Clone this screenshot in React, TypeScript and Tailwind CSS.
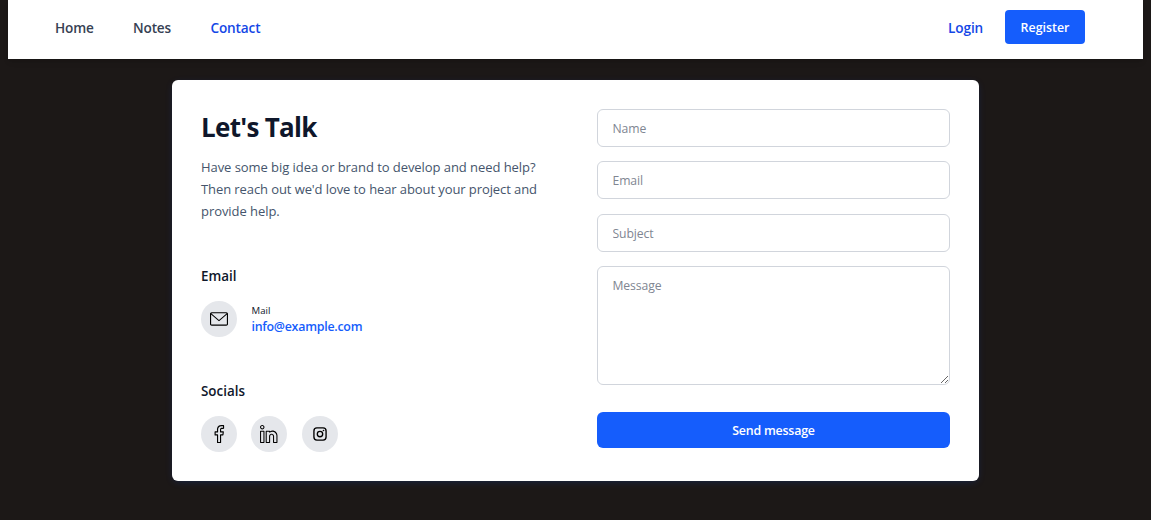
import React from "react";

const circle =
  "flex size-9 shrink-0 items-center justify-center rounded-full bg-[#e5e7eb] text-black";
const field =
  "block w-full rounded-md border border-[#d1d5dc] bg-white px-[14.5px] text-[12.2px] leading-[18px] tracking-[-0.1px] text-[#1e2939] outline-none placeholder:text-[#808692]";

function MailIcon() {
  return (
    <svg width="18" height="18" viewBox="0 0 479.058 479.058" fill="currentColor">
      <path d="M434.146 59.882H44.912C20.146 59.882 0 80.028 0 104.794v269.47c0 24.766 20.146 44.912 44.912 44.912h389.234c24.766 0 44.912-20.146 44.912-44.912v-269.47c0-24.766-20.146-44.912-44.912-44.912zm0 29.941c2.034 0 3.969.422 5.738 1.159L239.529 264.631 39.173 90.982a14.902 14.902 0 0 1 5.738-1.159zm0 299.411H44.912c-8.26 0-14.971-6.71-14.971-14.971V122.615l199.778 173.141c2.822 2.441 6.316 3.655 9.81 3.655s6.988-1.213 9.81-3.655l199.778-173.141v251.649c-.001 8.26-6.711 14.97-14.971 14.97z" />
    </svg>
  );
}

function FacebookIcon() {
  return (
    <svg width="18" height="18" viewBox="0 0 24 24" fill="currentColor">
      <path d="M6.812 13.937H9.33v9.312c0 .414.335.75.75.75l4.007.001a.75.75 0 0 0 .75-.75v-9.312h2.387a.75.75 0 0 0 .744-.657l.498-4a.75.75 0 0 0-.744-.843h-2.885c.113-2.471-.435-3.202 1.172-3.202 1.088-.13 2.804.421 2.804-.75V.909a.75.75 0 0 0-.648-.743A26.926 26.926 0 0 0 15.071 0c-7.01 0-5.567 7.772-5.74 8.437H6.812a.75.75 0 0 0-.75.75v4c0 .414.336.75.75.75zm.75-3.999h2.518a.75.75 0 0 0 .75-.75V6.037c0-2.883 1.545-4.536 4.24-4.536.878 0 1.686.042 2.242.087v2.149c-.402.205-3.976-.884-3.976 2.697v2.755c0 .414.336.75.75.75h2.786l-.312 2.5h-2.474a.75.75 0 0 0-.75.75V22.5h-2.505v-9.312a.75.75 0 0 0-.75-.75H7.562z" />
    </svg>
  );
}

function LinkedinIcon() {
  return (
    <svg width="18" height="18" viewBox="0 0 511 512" fill="currentColor">
      <path d="M111.898 160.664H15.5c-8.285 0-15 6.719-15 15V497c0 8.285 6.715 15 15 15h96.398c8.286 0 15-6.715 15-15V175.664c0-8.281-6.714-15-15-15zM96.898 482H30.5V190.664h66.398zM63.703 0C28.852 0 .5 28.352.5 63.195c0 34.852 28.352 63.2 63.203 63.2 34.848 0 63.195-28.352 63.195-63.2C126.898 28.352 98.551 0 63.703 0zm0 96.395c-18.308 0-33.203-14.891-33.203-33.2C30.5 44.891 45.395 30 63.703 30c18.305 0 33.195 14.89 33.195 33.195 0 18.309-14.89 33.2-33.195 33.2zm289.207 62.148c-22.8 0-45.273 5.496-65.398 15.777-.684-7.652-7.11-13.656-14.942-13.656h-96.406c-8.281 0-15 6.719-15 15V497c0 8.285 6.719 15 15 15h96.406c8.285 0 15-6.715 15-15V320.266c0-22.735 18.5-41.23 41.235-41.23 22.734 0 41.226 18.495 41.226 41.23V497c0 8.285 6.719 15 15 15h96.403c8.285 0 15-6.715 15-15V302.066c0-79.14-64.383-143.523-143.524-143.523zM466.434 482h-66.399V320.266c0-39.278-31.953-71.23-71.226-71.23-39.282 0-71.239 31.952-71.239 71.23V482h-66.402V190.664h66.402v11.082c0 5.77 3.309 11.027 8.512 13.524a15.01 15.01 0 0 0 15.875-1.82c20.313-16.294 44.852-24.907 70.953-24.907 62.598 0 113.524 50.926 113.524 113.523zm0 0" />
    </svg>
  );
}

function InstagramIcon() {
  return (
    <svg width="18" height="18" viewBox="0 0 24 24" fill="none" stroke="currentColor" strokeWidth="1.8">
      <rect x="3.9" y="3.9" width="16.2" height="16.2" rx="4" />
      <circle cx="12" cy="12" r="3.6" />
      <circle cx="16.7" cy="7.3" r="1.1" fill="currentColor" stroke="none" />
    </svg>
  );
}

function Navbar() {
  return (
    <header className="mx-2 flex h-[59px] items-center justify-between bg-white pr-[58px] pb-[5px] pl-[47px] shadow-md">
      <nav className="flex gap-[39.5px] pt-0.5 text-[13.6px] leading-5 font-semibold tracking-[-0.15px] text-[#364153]">
        <a className="w-[38.5px] whitespace-nowrap">Home</a>
        <a className="w-[38px] whitespace-nowrap">Notes</a>
        <a className="whitespace-nowrap text-[#1447e6]">Contact</a>
      </nav>
      <div className="flex items-center gap-[21px] text-[13.6px] font-semibold">
        <a className="w-9 pt-0.5 leading-5 tracking-[-0.1px] whitespace-nowrap text-[#1447e6]">Login</a>
        <button className="h-[34px] w-20 rounded bg-[#155dfc] pt-0.5 text-[12.4px] font-semibold text-white">
          Register
        </button>
      </div>
    </header>
  );
}

export default function App() {
  return (
    <div className="h-[520px] overflow-hidden bg-[#1c1817] font-['Open_Sans','Noto_Sans',sans-serif]">
      <Navbar />
      <main className="mx-auto mt-[21px] grid h-[401px] w-[807px] grid-cols-2 gap-[43px] rounded-md bg-white p-[29px] shadow-[0_2px_10px_-3px_rgba(6,81,237,0.3)]">
        <section>
          <h1 className="text-[26px] leading-9 font-bold tracking-[-0.7px] text-[#0f172b]">Let's Talk</h1>
          <p className="mt-[11px] text-[13px] leading-[22px] tracking-[-0.06px] whitespace-nowrap text-[#45556c]">
            Have some big idea or brand to develop and need help?
            <br />
            <span className="tracking-[-0.09px]">Then reach out we'd love to hear about your project and</span>
            <br />
            provide help.
          </p>
          <h2 className="mt-11 text-[13.4px] leading-5 font-semibold text-[#0f172b]">Email</h2>
          <div className="mt-[15px] flex items-center">
            <span className={circle}>
              <MailIcon />
            </span>
            <a className="ml-[14.5px] block pt-0.5">
              <small className="block text-[9.6px] leading-[14px] text-[#0f172b]">Mail</small>
              <span className="block text-[12.4px] leading-[18px] font-semibold tracking-[-0.25px] text-[#155dfc]">
                info@example.com
              </span>
            </a>
          </div>
          <h2 className="mt-11 text-[13.4px] leading-5 font-semibold text-[#0f172b]">Socials</h2>
          <div className="mt-[15px] flex gap-[14.4px]">
            <a className={circle}>
              <FacebookIcon />
            </a>
            <a className={circle}>
              <LinkedinIcon />
            </a>
            <a className={circle}>
              <InstagramIcon />
            </a>
          </div>
        </section>
        <form className="flex flex-col gap-[14.4px]">
          <input type="text" placeholder="Name" className={`${field} h-[38px]`} />
          <input type="email" placeholder="Email" className={`${field} h-[38px]`} />
          <input type="text" placeholder="Subject" className={`${field} h-[38px] pt-0.5`} />
          <textarea placeholder="Message" className={`${field} h-[119px] resize-y pt-2.5`} />
          <button
            type="button"
            className="mt-3 h-9 rounded-md bg-[#155dfc] pt-[3px] text-[12.4px] font-semibold tracking-[-0.2px] text-white"
          >
            Send message
          </button>
        </form>
      </main>
    </div>
  );
}
